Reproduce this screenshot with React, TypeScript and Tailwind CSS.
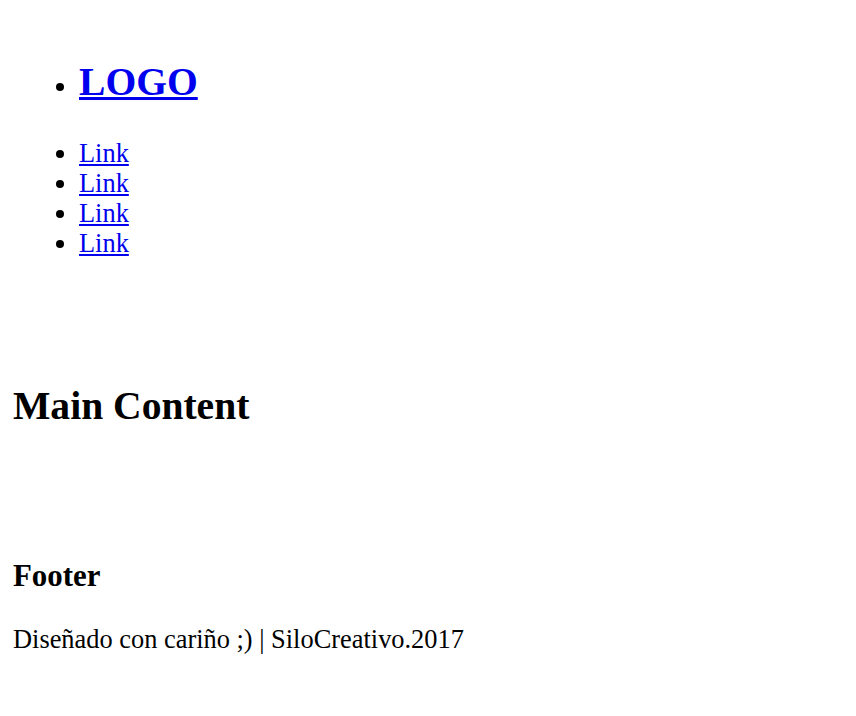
import React from 'react';

const links = ['Link', 'Link', 'Link', 'Link'];

export default function App() {
  return (
    <div className="min-h-screen bg-white px-[13px] font-['Liberation_Serif','Times_New_Roman',serif] text-[26.4px] leading-[30px] text-black">
      <header className="pt-[59.3px]">
        <nav>
          <ul className="list-disc pl-[66px]">
            <li>
              <h1 className="text-[39.6px] font-bold leading-[normal]">
                <a href="#" className="text-[#0000ee] underline">LOGO</a>
              </h1>
            </li>
          </ul>
          <ul className="mt-[32.9px] list-disc pl-[66px]">
            {links.map((label, i) => (
              <li key={i}>
                <a href="#" className="text-[#0000ee] underline">{label}</a>
              </li>
            ))}
          </ul>
        </nav>
      </header>

      <main className="mt-[124.8px]">
        <h2 className="text-[39.6px] font-bold leading-[normal]">Main Content</h2>
      </main>

      <footer className="mt-[129.3px]">
        <h3 className="text-[30.9px] font-bold leading-[normal]">Footer</h3>
        <p className="mt-[29.4px]">Diseñado con cariño ;) | SiloCreativo.2017</p>
      </footer>
    </div>
  );
}
